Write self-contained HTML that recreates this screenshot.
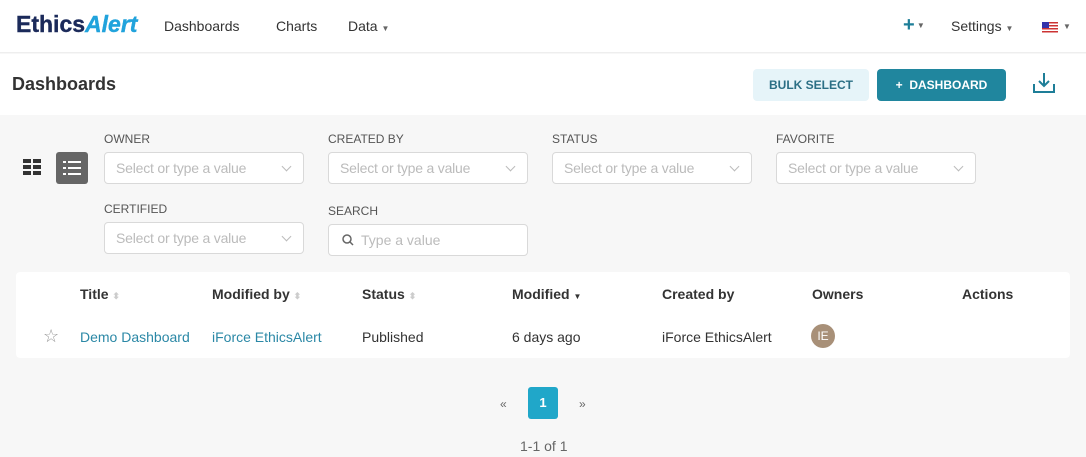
<!DOCTYPE html>
<html><head><style>
*{box-sizing:border-box;margin:0;padding:0}
body{width:1086px;height:457px;background:#f7f7f7;font-family:"Liberation Sans",sans-serif;color:#333;position:relative;overflow:hidden;font-size:14px}
.a{position:absolute}
.nav{top:0;left:0;width:1086px;height:53px;background:#fff;border-bottom:1px solid #eee}
.hdr{top:54px;left:0;width:1086px;height:61px;background:#fff}
.lbl{font-size:12px;color:#555}
.sel{width:200px;height:32px;background:#fff;border:1px solid #d9d9d9;border-radius:4px;color:#bbb;font-size:14px;padding:7px 11px;letter-spacing:-0.2px}
.sel:after{content:"";position:absolute;right:13px;top:10px;width:6px;height:6px;border-right:1px solid #bbb;border-bottom:1px solid #bbb;transform:rotate(45deg)}
.th{font-weight:bold;font-size:14px;color:#333}
.srt{color:#ccc;font-size:9px}
.link{color:#2b88a6}
</style></head><body>
<div class="a nav"></div>
<div class="a" style="left:16px;top:11px;font-size:23px;font-weight:900;color:#1b2a5a;letter-spacing:0px;-webkit-text-stroke:0.4px #1b2a5a">Ethics<i style="color:#21a3dc;-webkit-text-stroke:0.4px #21a3dc">Alert</i></div>
<div class="a" style="left:164px;top:18px;font-size:14px">Dashboards</div>
<div class="a" style="left:276px;top:18px">Charts</div>
<div class="a" style="left:348px;top:18px">Data <span style="font-size:8px;color:#666">▼</span></div>
<div class="a" style="left:903px;top:14px;font-size:20px;font-weight:bold;color:#1e7e98">+<span style="font-size:8px;color:#666;vertical-align:3px"> ▼</span></div>
<div class="a" style="left:951px;top:18px">Settings <span style="font-size:8px;color:#666">▼</span></div>
<div class="a" style="left:1042px;top:22px;width:16px;height:11px;background:repeating-linear-gradient(#c33 0 1.5px,#fff 1.5px 3px)"><div style="width:7px;height:6px;background:#33a"></div></div>
<div class="a" style="left:1063px;top:22px;font-size:8px;color:#666">▼</div>
<div class="a hdr"></div>
<div class="a" style="left:12px;top:74px;font-size:18px;font-weight:bold;color:#333">Dashboards</div>
<div class="a" style="left:753px;top:69px;width:116px;height:32px;background:#e6f4f9;border-radius:4px;color:#2b6f85;font-size:12px;font-weight:bold;text-align:center;line-height:32px">BULK SELECT</div>
<div class="a" style="left:877px;top:69px;width:129px;height:32px;background:#20869e;border-radius:4px;color:#fff;font-size:12px;font-weight:bold;text-align:center;line-height:32px">+ &nbsp;DASHBOARD</div>
<svg class="a" style="left:1032px;top:72px" width="24" height="22" viewBox="0 0 24 22" fill="none" stroke="#1e7e98" stroke-width="2"><path d="M12 1v13M7 9l5 5 5-5M2 12v8h20v-8"/></svg>
<svg class="a" style="left:23px;top:159px" width="18" height="16"><rect x="0" y="0" width="8" height="4" fill="#333"/><rect x="10" y="0" width="8" height="4" fill="#333"/><rect x="0" y="6" width="8" height="4" fill="#333"/><rect x="10" y="6" width="8" height="4" fill="#333"/><rect x="0" y="12" width="8" height="4" fill="#333"/><rect x="10" y="12" width="8" height="4" fill="#333"/></svg>
<div class="a" style="left:56px;top:152px;width:32px;height:32px;background:#666;border-radius:3px"></div>
<svg class="a" style="left:63px;top:160px" width="18" height="16" fill="#fff"><rect x="0" y="1" width="3" height="2"/><rect x="5" y="1" width="13" height="2"/><rect x="0" y="7" width="3" height="2"/><rect x="5" y="7" width="13" height="2"/><rect x="0" y="13" width="3" height="2"/><rect x="5" y="13" width="13" height="2"/></svg>
<div class="a lbl" style="left:104px;top:132px">OWNER</div><div class="a sel" style="left:104px;top:152px">Select or type a value</div>
<div class="a lbl" style="left:328px;top:132px">CREATED BY</div><div class="a sel" style="left:328px;top:152px">Select or type a value</div>
<div class="a lbl" style="left:552px;top:132px">STATUS</div><div class="a sel" style="left:552px;top:152px">Select or type a value</div>
<div class="a lbl" style="left:776px;top:132px">FAVORITE</div><div class="a sel" style="left:776px;top:152px">Select or type a value</div>
<div class="a lbl" style="left:104px;top:202px">CERTIFIED</div><div class="a sel" style="left:104px;top:222px">Select or type a value</div>
<div class="a lbl" style="left:328px;top:204px">SEARCH</div>
<div class="a" style="left:328px;top:224px;width:200px;height:32px;background:#fff;border:1px solid #d9d9d9;border-radius:4px;color:#bbb;padding:7px 11px 7px 32px">Type a value</div>
<svg class="a" style="left:342px;top:234px" width="12" height="12" fill="none" stroke="#666" stroke-width="1.5"><circle cx="5" cy="5" r="4"/><path d="M8 8l3 3"/></svg>
<div class="a" style="left:16px;top:272px;width:1054px;height:86px;background:#fff;border-radius:4px"></div>
<div class="a th" style="left:80px;top:286px">Title <span class="srt">⬍</span></div>
<div class="a th" style="left:212px;top:286px">Modified by <span class="srt">⬍</span></div>
<div class="a th" style="left:362px;top:286px">Status <span class="srt">⬍</span></div>
<div class="a th" style="left:512px;top:286px">Modified <span style="font-size:8px;color:#333">▼</span></div>
<div class="a th" style="left:662px;top:286px">Created by</div>
<div class="a th" style="left:812px;top:286px">Owners</div>
<div class="a th" style="left:962px;top:286px">Actions</div>
<div class="a" style="left:43px;top:326px;font-size:18px;color:#999">☆</div>
<div class="a link" style="left:80px;top:329px">Demo Dashboard</div>
<div class="a link" style="left:212px;top:329px">iForce EthicsAlert</div>
<div class="a" style="left:362px;top:329px">Published</div>
<div class="a" style="left:512px;top:329px">6 days ago</div>
<div class="a" style="left:662px;top:329px">iForce EthicsAlert</div>
<div class="a" style="left:811px;top:324px;width:24px;height:24px;border-radius:50%;background:#a89078;color:#fff;font-size:12px;text-align:center;line-height:24px">IE</div>
<div class="a" style="left:500px;top:397px;font-size:12px;color:#666">«</div>
<div class="a" style="left:528px;top:387px;width:30px;height:32px;background:#20a7c9;border-radius:3px;color:#fff;font-weight:bold;text-align:center;line-height:32px;font-size:13px">1</div>
<div class="a" style="left:579px;top:397px;font-size:12px;color:#666">»</div>
<div class="a" style="left:520px;top:438px;color:#666">1-1 of 1</div>
</body></html>
